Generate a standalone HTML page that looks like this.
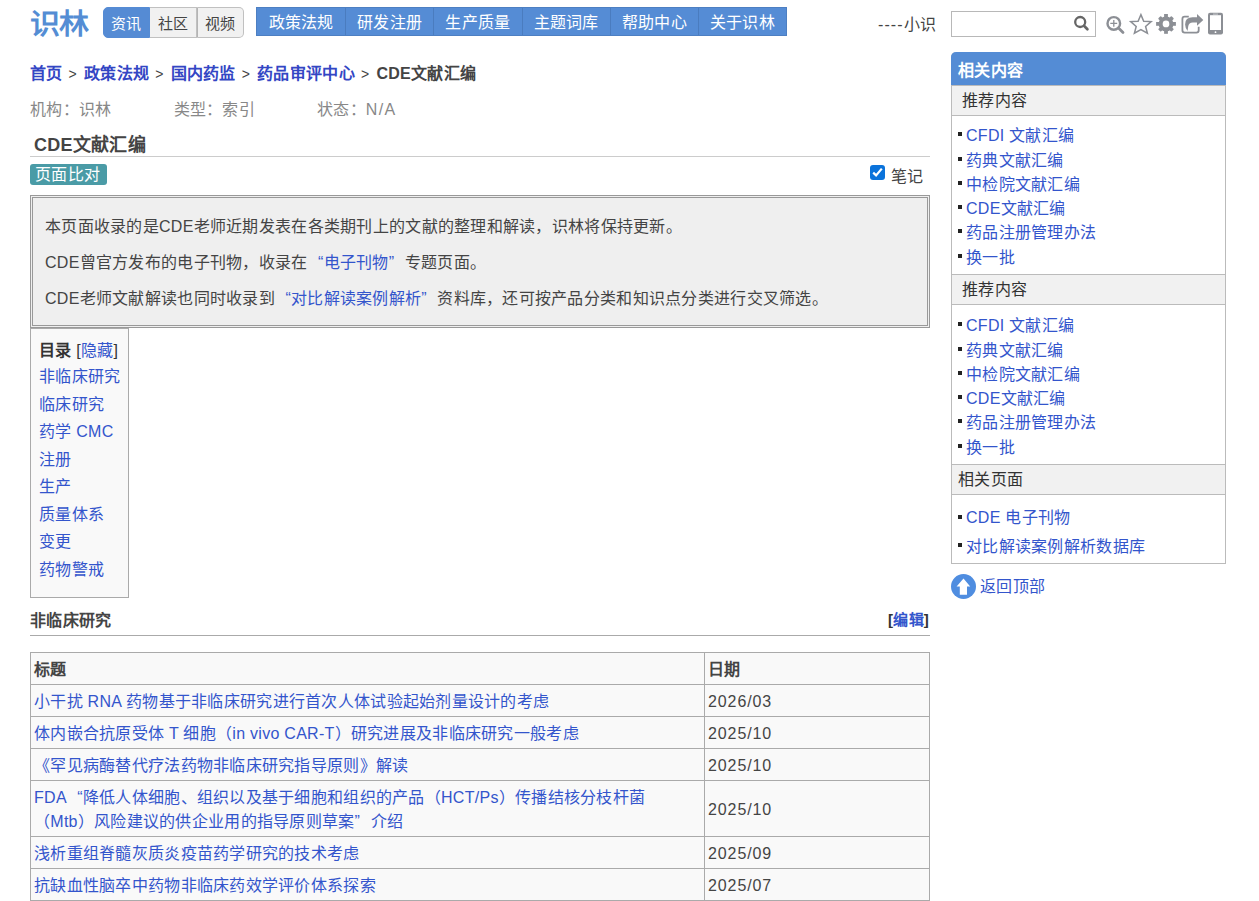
<!DOCTYPE html>
<html lang="zh-CN">
<head>
<meta charset="utf-8">
<title>CDE文献汇编</title>
<style>
*{box-sizing:border-box}
html,body{margin:0;padding:0;background:#fff}
body{font-family:"Liberation Sans",sans-serif;font-size:16px;letter-spacing:0.28px;color:#333;width:1259px;height:901px;overflow:hidden;position:relative}
a{text-decoration:none;color:#3355cc}
.lq,.rq{display:inline-block;width:16px}.lq{text-align:right}.rq{text-align:left}
.abs{position:absolute}
/* header */
#logo{left:30px;top:6px;font-size:30px;font-weight:bold;color:#548dd4;line-height:40px;letter-spacing:-1px;transform:scaleY(0.94);transform-origin:0 0}
#tabs{left:103px;top:7px;width:141px;height:31px;display:flex}
#tabs span{display:block;height:31px;line-height:31px;text-align:center;font-size:15px;color:#444;background:#f1f1f1;border:1px solid #c0c0c0;border-left:0}
#tabs span.on{background:#558bd4;color:#fff;border:1px solid #558bd4;border-radius:5px 0 0 5px;width:47px}
#tabs span.t2{width:47px}
#tabs span.t3{width:47px;border-left:1px solid #b4b4b4;border-radius:0 5px 5px 0;width:47px}
#nav{left:256px;top:7px;width:531px;height:29px;background:#558cd5;border:1px solid #4d7fc2;display:flex}
#nav span{display:block;height:27px;line-height:29px;text-align:center;color:#fff;width:88.5px}
#nav span+span{border-left:1px solid #4a7cbf}
#xiaoshi{left:878px;top:15px;line-height:20px;color:#444}
#search{left:951px;top:11px;width:145px;height:26px;border:1px solid #b8b8b8;background:#fff}
/* breadcrumb */
#crumb{left:30px;top:63px;line-height:22px;font-weight:bold;white-space:nowrap}
#crumb a{color:#3346c4}
#crumb .sep{font-weight:normal;color:#444;font-size:14px;padding:0 7px 0 6px}
#crumb .cur{color:#444}
#meta{left:30px;top:99px;line-height:22px;color:#888;white-space:nowrap}
#meta span{display:inline-block;width:143.5px}
#title{left:34px;top:134px;font-size:18px;font-weight:bold;color:#444;line-height:22px}
#hr1{left:30px;top:156px;width:900px;height:1px;background:#ccc}
#badge{left:30px;top:164px;width:77px;height:21px;background:#4a9ba6;border-radius:3px;color:#fff;line-height:21px;padding-left:5px;}
#chk{left:870px;top:165px}
#note{left:891px;top:167px;line-height:20px;color:#444}
#intro{left:30px;top:195px;width:900px;height:133px;border:3px double #999;background:#efefef;padding:17px 0 0 12px;color:#444}
#intro p{margin:0 0 12px 0;line-height:24px}
#intro a{color:#3355cc}
#toc{left:30px;top:328px;width:99px;height:270px;border:1px solid #aaa;background:#f9f9f9}
#toc .h{position:absolute;left:8px;top:11px;line-height:22px;white-space:nowrap;color:#333}
#toc .h b{color:#333}
#toc .h a{color:#3355cc}
#toc ul{position:absolute;left:8px;top:34px;margin:0;padding:0;list-style:none}
#toc li{line-height:27.5px;white-space:nowrap}
#sec{left:30px;top:610px;font-weight:bold;color:#444;line-height:22px}
#edit{left:888px;top:609px;font-weight:bold;color:#333;line-height:22px;font-size:15px}
#edit a{color:#3355cc}
#hr2{left:30px;top:635px;width:900px;height:1px;background:#aaa}
#tbl{left:30px;top:652px;width:900px;border-collapse:collapse;background:#f9f9f9}
#tbl td,#tbl th{border:1px solid #aaa;padding:5px 3px 3px;line-height:23px;text-align:left;color:#444;font-weight:normal}
#tbl th{font-weight:bold}
#tbl td.d{letter-spacing:0.9px}
#tbl a{color:#3355cc}
/* sidebar */
#side{left:951px;top:52px;width:275px;height:512px;border:1px solid #bbb;border-top:0;border-radius:5px 5px 0 0}
#side .hd{position:absolute;left:-1px;top:0;width:275px;height:33px;background:#548cd5;border-radius:5px 5px 0 0;color:#fff;font-weight:bold;line-height:37px;padding-left:7px}
.sub{position:absolute;left:0;width:273px;height:31px;background:#f1f1f1;border-top:1px solid #bbb;border-bottom:1px solid #bbb;line-height:29px;padding-left:10px;color:#333}
.lst{position:absolute;left:0;margin:0;padding:0;list-style:none}
.lst li{position:relative;padding-left:14px;white-space:nowrap;line-height:24.3px}
.l3 li{line-height:28.6px}
.lst.l3 li:before{top:10.5px}
.lst li:before{content:"";position:absolute;left:6px;top:8px;width:4px;height:4px;background:#222}
.lst a{color:#3355cc}
#top{left:951px;top:574px}
#toptxt{left:980px;top:576px;line-height:22px;color:#3355cc}
</style>
</head>
<body>
<div id="logo" class="abs">识林</div>
<div id="tabs" class="abs"><span class="on">资讯</span><span class="t2">社区</span><span class="t3">视频</span></div>
<div id="nav" class="abs"><span>政策法规</span><span>研发注册</span><span>生产质量</span><span>主题词库</span><span>帮助中心</span><span>关于识林</span></div>
<div id="xiaoshi" class="abs"><span style="letter-spacing:1.1px">----</span>小识</div>
<div id="search" class="abs"></div>
<svg class="abs" style="left:0;top:0" width="1259" height="60" viewBox="0 0 1259 60">
<g fill="none" stroke="#666" stroke-width="2.3"><circle cx="1080.2" cy="22" r="5"/><path d="M1084 25.8L1087.4 29.2" stroke-linecap="round" stroke-width="2.7"/></g>
<g fill="none" stroke="#8c8f95"><circle cx="1113.8" cy="23.4" r="6.3" stroke-width="2.4"/><path d="M1118.5 28.1L1123 32.6" stroke-width="2.8" stroke-linecap="round"/><path d="M1110.3 23.4H1117.2M1113.8 19.9V26.8" stroke-width="1.3"/></g>
<path fill="none" stroke="#8c8f95" stroke-width="1.5" stroke-linejoin="miter" d="M1140.9 14.6L1143.7 21.3L1151.1 21.6L1145.6 26.4L1147.4 33.2L1140.9 29.5L1134.4 33.2L1136.2 26.4L1130.7 21.6L1138.1 21.3Z"/>
<g transform="translate(1166 23.9)" fill="#8c8f95"><circle r="7.4"/><rect x="-1.9" y="-9.9" width="3.8" height="19.8"/><rect x="-1.9" y="-9.9" width="3.8" height="19.8" transform="rotate(90)"/><rect x="-1.9" y="-9.4" width="3.8" height="18.8" rx="0.8" transform="rotate(45)"/><rect x="-1.9" y="-9.4" width="3.8" height="18.8" rx="0.8" transform="rotate(135)"/><circle r="3.35" fill="#fff"/></g>
<path fill="none" stroke="#8c8f95" stroke-width="1.8" d="M1188.8 16.6H1184.7Q1182.4 16.6 1182.4 18.9V30.3Q1182.4 32.6 1184.7 32.6H1196.4Q1198.7 32.6 1198.7 30.3V26.8"/>
<path fill="#8c8f95" d="M1197 14L1203.3 19.9L1197 25.8V22.6H1192.8Q1188.8 22.6 1188.2 26.5Q1187.9 28.8 1187.6 30.9Q1185.1 27.6 1185.1 24.4Q1185.1 17.3 1192.6 17.3H1197Z"/>
<rect x="1208" y="12.8" width="15" height="21.6" rx="2" fill="#8c8f95"/>
<rect x="1210" y="15.2" width="11" height="14.8" fill="#fff"/>
<rect x="1213" y="13.6" width="5" height="1" fill="#c8cacd"/>
<circle cx="1215.5" cy="32.2" r="0.9" fill="#fff"/>
</svg>

<div id="crumb" class="abs"><a>首页</a><span class="sep">&gt;</span><a>政策法规</a><span class="sep">&gt;</span><a>国内药监</a><span class="sep">&gt;</span><a>药品审评中心</a><span class="sep">&gt;</span><span class="cur">CDE文献汇编</span></div>
<div id="meta" class="abs"><span>机构：识林</span><span>类型：索引</span><span>状态：<i style="font-style:normal;letter-spacing:1.3px">N/A</i></span></div>
<div id="title" class="abs">CDE文献汇编</div>
<div id="hr1" class="abs"></div>
<div id="badge" class="abs">页面比对</div>
<svg id="chk" class="abs" width="15" height="15" viewBox="0 0 15 15"><rect width="15" height="15" rx="3" fill="#0b73db"/><path d="M3.2 7.6L6.1 10.4L11.8 3.6" fill="none" stroke="#fff" stroke-width="2.2"/></svg>
<div id="note" class="abs">笔记</div>

<div id="intro" class="abs">
<p>本页面收录的是CDE老师近期发表在各类期刊上的文献的整理和解读，识林将保持更新。</p>
<p>CDE曾官方发布的电子刊物，收录在<a><span class="lq">“</span>电子刊物<span class="rq">”</span></a>专题页面。</p>
<p>CDE老师文献解读也同时收录到<a><span class="lq">“</span>对比解读案例解析<span class="rq">”</span></a>资料库，还可按产品分类和知识点分类进行交叉筛选。</p>
</div>

<div id="toc" class="abs">
<div class="h"><b>目录</b> [<a>隐藏</a>]</div>
<ul><li><a>非临床研究</a></li><li><a>临床研究</a></li><li><a>药学 CMC</a></li><li><a>注册</a></li><li><a>生产</a></li><li><a>质量体系</a></li><li><a>变更</a></li><li><a>药物警戒</a></li></ul>
</div>

<div id="sec" class="abs">非临床研究</div>
<div id="edit" class="abs">[<a>编辑</a>]</div>
<div id="hr2" class="abs"></div>

<table id="tbl" class="abs">
<tr><th style="width:674px">标题</th><th>日期</th></tr>
<tr><td><a>小干扰 RNA 药物基于非临床研究进行首次人体试验起始剂量设计的考虑</a></td><td class="d">2026/03</td></tr>
<tr><td><a>体内嵌合抗原受体 T 细胞（in vivo CAR-T）研究进展及非临床研究一般考虑</a></td><td class="d">2025/10</td></tr>
<tr><td><a>《罕见病酶替代疗法药物非临床研究指导原则》解读</a></td><td class="d">2025/10</td></tr>
<tr><td style="line-height:24px;padding-bottom:2px"><a>FDA<span class="lq">“</span>降低人体细胞、组织以及基于细胞和组织的产品（HCT/Ps）传播结核分枝杆菌<br>（Mtb）风险建议的供企业用的指导原则草案<span class="rq">”</span>介绍</a></td><td class="d">2025/10</td></tr>
<tr><td><a>浅析重组脊髓灰质炎疫苗药学研究的技术考虑</a></td><td class="d">2025/09</td></tr>
<tr><td><a>抗缺血性脑卒中药物非临床药效学评价体系探索</a></td><td class="d">2025/07</td></tr>
</table>

<div id="side" class="abs">
<div class="hd">相关内容</div>
<div class="sub" style="top:33px">推荐内容</div>
<ul class="lst" style="top:72.3px"><li><a>CFDI 文献汇编</a></li><li><a>药典文献汇编</a></li><li><a>中检院文献汇编</a></li><li><a>CDE文献汇编</a></li><li><a>药品注册管理办法</a></li><li><a>换一批</a></li></ul>
<div class="sub" style="top:222px">推荐内容</div>
<ul class="lst" style="top:262.3px"><li><a>CFDI 文献汇编</a></li><li><a>药典文献汇编</a></li><li><a>中检院文献汇编</a></li><li><a>CDE文献汇编</a></li><li><a>药品注册管理办法</a></li><li><a>换一批</a></li></ul>
<div class="sub" style="top:412px;padding-left:6px">相关页面</div>
<ul class="lst l3" style="top:452.1px"><li><a>CDE 电子刊物</a></li><li><a>对比解读案例解析数据库</a></li></ul>
</div>
<svg id="top" class="abs" width="25" height="25" viewBox="0 0 25 25"><circle cx="12.5" cy="12.5" r="12.5" fill="#4f8de0"/><path d="M12.5 4.6L19.2 12.4H16V20.8H8.8V12.4H5.6Z" fill="#fff"/></svg>
<div id="toptxt" class="abs">返回顶部</div>
</body>
</html>
